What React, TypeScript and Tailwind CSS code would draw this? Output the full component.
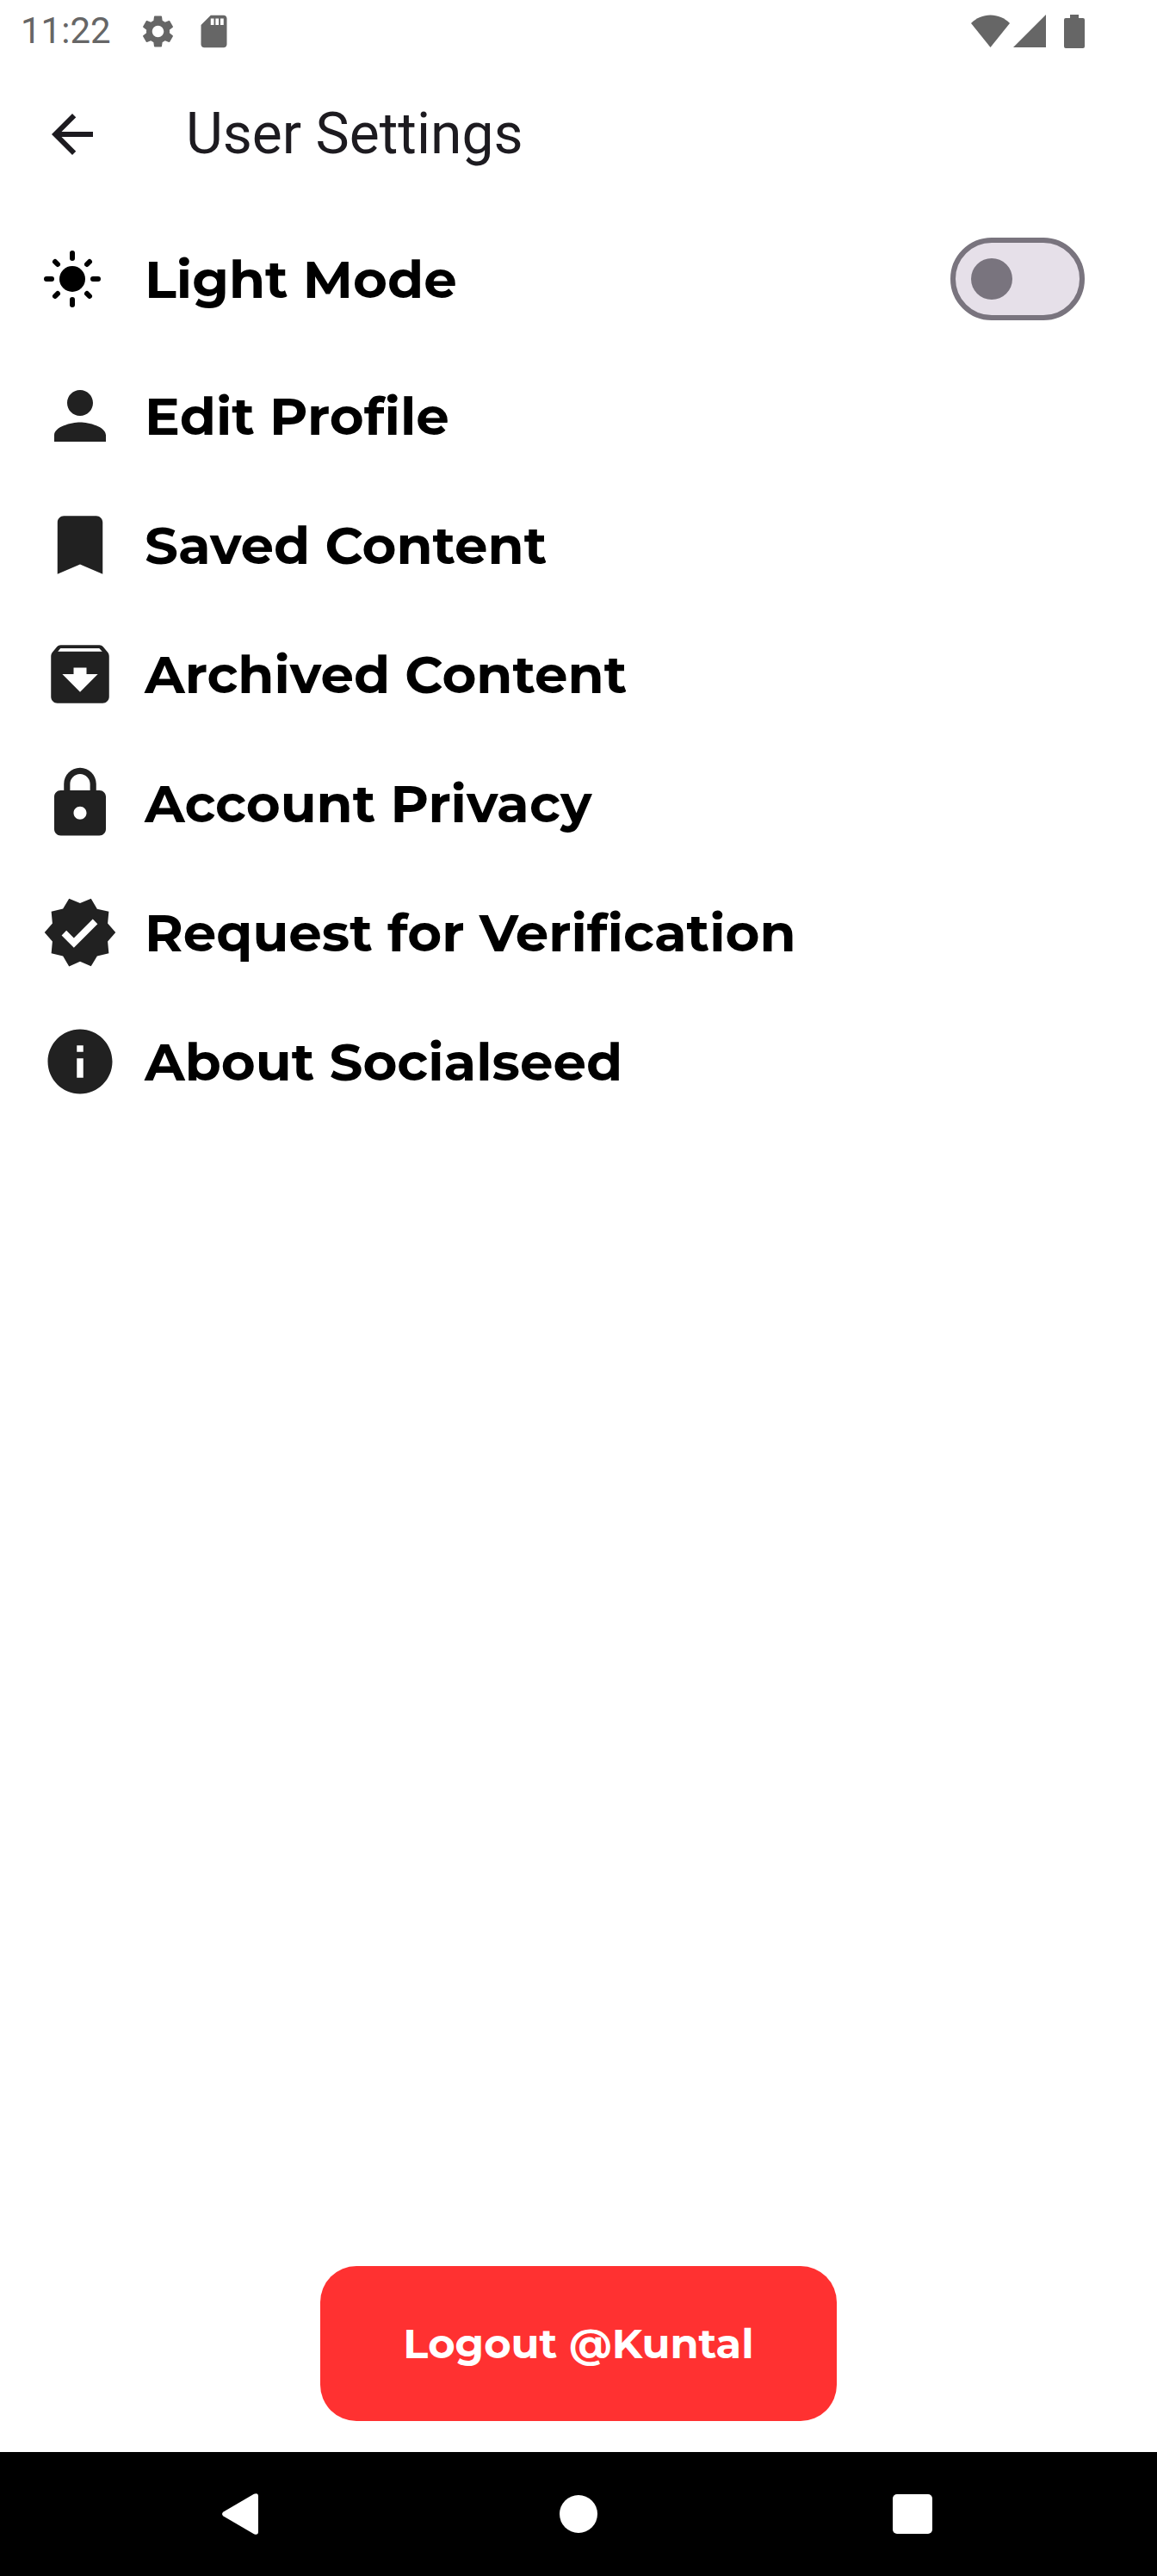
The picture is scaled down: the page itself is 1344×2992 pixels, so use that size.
import { useState } from "react";
import type { IconType } from "react-icons";
import {
  MdArchive,
  MdArrowBack,
  MdBookmark,
  MdInfo,
  MdLock,
  MdPerson,
  MdSdCard,
  MdSettings,
  MdVerified,
} from "react-icons/md";

const items: { label: string; Icon: IconType }[] = [
  { label: "Edit Profile", Icon: MdPerson },
  { label: "Saved Content", Icon: MdBookmark },
  { label: "Archived Content", Icon: MdArchive },
  { label: "Account Privacy", Icon: MdLock },
  { label: "Request for Verification", Icon: MdVerified },
  { label: "About Socialseed", Icon: MdInfo },
];

function StatusBar() {
  return (
    <div className="flex h-[72px] items-center justify-between pr-[84px] pl-6 text-[#666666]">
      <div className="flex items-center">
        <span className="text-[42px] leading-[48px]">11:22</span>
        <MdSettings className="ml-8 size-[45px]" />
        <MdSdCard className="ml-5 size-[45px]" />
      </div>
      <div className="flex items-center">
        <svg className="h-[38px] w-[45px]" viewBox="0 0 45 38" fill="currentColor">
          <path d="M22.5 38 0 10C6 4 14 0.500 22.500 0.500S39 4 45 10Z" />
        </svg>
        <svg className="ml-1 size-[38px]" viewBox="0 0 38 38" fill="currentColor">
          <path d="M38 0V38H0Z" />
        </svg>
        <svg className="ml-[21px] h-[39px] w-6" viewBox="0 0 24 39" fill="currentColor">
          <path d="M7 0H17V4H22Q24 4 24 6V37Q24 39 22 39H2Q0 39 0 37V6Q0 4 2 4H7Z" />
        </svg>
      </div>
    </div>
  );
}

function SunIcon() {
  return (
    <svg
      className="size-[66px]"
      viewBox="-33 -33 66 66"
      stroke="currentColor"
      strokeWidth="6"
      strokeLinecap="round"
    >
      <circle r="15" stroke="none" fill="currentColor" />
      <path d="M0-30V-24M0 24V30M-30 0H-24M24 0H30M-20-20L-17-17M20-20L17-17M-20 20L-17 17M20 20L17 17" />
    </svg>
  );
}

export default function App() {
  const [light, setLight] = useState(false);
  return (
    <div className="flex min-h-screen flex-col bg-white font-['Roboto',sans-serif]">
      <StatusBar />
      <header className="flex h-[168px] items-center pl-12 text-[#1d1b20]">
        <button aria-label="Back">
          <MdArrowBack className="size-[72px]" />
        </button>
        <h1 className="ml-24 text-[66px] leading-[84px]">User Settings</h1>
      </header>

      <main className="flex flex-1 flex-col font-['Montserrat','Inter',sans-serif] font-bold">
        <div className="flex h-[168px] items-center pr-[84px] pl-12 text-[61px] leading-[72px] text-black">
          <span className="flex w-[72px] justify-center">
            <SunIcon />
          </span>
          <label htmlFor="mode" className="ml-12 flex-1">
            Light Mode
          </label>
          <span className="relative flex">
            <input
              id="mode"
              type="checkbox"
              role="switch"
              checked={light}
              onChange={(e) => setLight(e.target.checked)}
              className="peer h-24 w-[156px] appearance-none rounded-full border-6 border-[#79747e] bg-[#e6e0e9]"
            />
            <span className="pointer-events-none absolute top-6 left-6 size-12 rounded-full bg-[#79747e] peer-checked:left-[84px]" />
          </span>
        </div>

        <ul>
          {items.map(({ label, Icon }) => (
            <li key={label}>
              <button className="flex h-[150px] w-full items-center gap-[30px] pl-12 text-left text-[61px] leading-[72px] text-black">
                <Icon className="size-[90px] text-[#212121]" />
                {label}
              </button>
            </li>
          ))}
        </ul>

        <div className="mt-auto flex justify-center pb-9">
          <button className="h-[180px] w-[600px] rounded-[42px] bg-[#ff3131] text-[48px] leading-[60px] text-white">
            Logout @Kuntal
          </button>
        </div>
      </main>

      <nav className="grid h-36 grid-cols-3 bg-black px-[90px] text-white">
        <button aria-label="Back" className="flex items-center justify-center">
          <svg className="h-12 w-[52px]" viewBox="0 0 52 48" fill="currentColor">
            <path d="M1.500 21.500 37 0.800Q42 -1 42 3.500V44.500Q42 49 37 47.200L1.500 26.500Q-1.500 24 1.500 21.500Z" />
          </svg>
        </button>
        <button aria-label="Home" className="flex items-center justify-center">
          <span className="size-11 rounded-full bg-white" />
        </button>
        <button aria-label="Recent apps" className="flex items-center justify-center">
          <span className="size-[46px] rounded-[5px] bg-white" />
        </button>
      </nav>
    </div>
  );
}
